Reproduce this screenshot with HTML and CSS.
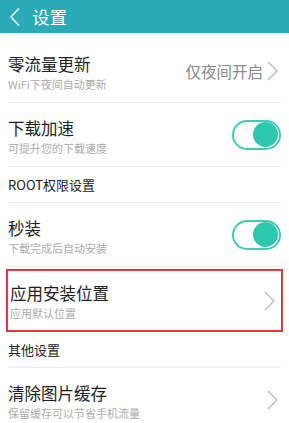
FILE: index.html
```html
<!DOCTYPE html>
<html lang="zh-CN">
<head>
    <meta charset="UTF-8">
    <meta name="viewport" content="width=device-width, initial-scale=1.0">
    <title>设置</title>
    <link rel="stylesheet" href="styles.css">
</head>
<body>
    <div class="top-bar">
        <svg class="back" width="12" height="20" viewBox="0 0 12 20">
            <polyline points="10,1.5 2,10 10,18.5" fill="none" stroke="#ffffff" stroke-width="1.5"/>
        </svg>
        <span class="top-title">设置</span>
    </div>

    <div class="list">
        <div class="item">
            <div class="texts">
                <div class="title">零流量更新</div>
                <div class="sub">WiFi下夜间自动更新</div>
            </div>
            <span class="value">仅夜间开启</span>
            <svg class="arrow" width="11" height="20" viewBox="0 0 11 20">
                <polyline points="1,1 10,10 1,19" fill="none" stroke="#b8b8b8" stroke-width="1.3"/>
            </svg>
        </div>
        <div class="item">
            <div class="texts">
                <div class="title">下载加速</div>
                <div class="sub">可提升您的下载速度</div>
            </div>
            <div class="switch on"><span class="knob"></span></div>
        </div>
        <div class="group">ROOT权限设置</div>
        <div class="item">
            <div class="texts">
                <div class="title">秒装</div>
                <div class="sub">下载完成后自动安装</div>
            </div>
            <div class="switch on"><span class="knob"></span></div>
        </div>
        <div class="item marked">
            <div class="texts">
                <div class="title">应用安装位置</div>
                <div class="sub">应用默认位置</div>
            </div>
            <svg class="arrow" width="11" height="20" viewBox="0 0 11 20">
                <polyline points="1,1 10,10 1,19" fill="none" stroke="#b8b8b8" stroke-width="1.3"/>
            </svg>
        </div>
        <div class="group">其他设置</div>
        <div class="item">
            <div class="texts">
                <div class="title">清除图片缓存</div>
                <div class="sub">保留缓存可以节省手机流量</div>
            </div>
            <svg class="arrow" width="11" height="20" viewBox="0 0 11 20">
                <polyline points="1,1 10,10 1,19" fill="none" stroke="#b8b8b8" stroke-width="1.3"/>
            </svg>
        </div>
    </div>
</body>
</html>
```

FILE: styles.css
```css
body {
    margin: 0;
    background-color: #ffffff;
    font-family: "Noto Sans CJK SC", "Noto Sans", sans-serif;
    overflow: hidden;
}
.top-bar {
    display: flex;
    align-items: center;
    height: 33px;
    padding-left: 9px;
    background-color: #29aab6;
    box-shadow: 0 1px 4px rgba(0,0,0,0.12);
}
.back {
    margin-right: 11px;
}
.top-title {
    color: #ffffff;
    font-size: 17.5px;
    line-height: 1;
}
.list {
    padding-top: 6px;
}
.item {
    display: flex;
    align-items: center;
    height: 64px;
    margin: 0 8px;
    border-bottom: 1px solid #eeeeee;
    box-sizing: border-box;
}
.texts {
    flex: 1;
    align-self: flex-start;
    padding-top: 13px;
}
.title {
    font-size: 16.5px;
    line-height: 24px;
    color: #1e1e1e;
}
.sub {
    font-size: 11px;
    line-height: 16px;
    color: #ababab;
}
.value {
    font-size: 15.5px;
    color: #8a8a8a;
    margin-right: 4px;
}
.arrow {
    margin-right: 3px;
}
.group {
    height: 36px;
    margin: 0 8px;
    display: flex;
    align-items: center;
    font-size: 13px;
    color: #222222;
    border-bottom: 1px solid #eeeeee;
    box-sizing: border-box;
}
.marked {
    margin: 2px 6px 0 6px;
    padding: 0 6px 0 2px;
    height: 63px;
    border: 2px solid #e3363d;
}
.marked .texts {
    padding-top: 10px;
}
.marked .arrow {
    margin-right: 0;
}
.switch {
    width: 49px;
    height: 30px;
    border: 2px solid #3fcbb5;
    border-radius: 16px;
    box-sizing: border-box;
    display: flex;
    align-items: center;
    justify-content: flex-end;
    padding-right: 1px;
}
.knob {
    width: 25px;
    height: 25px;
    border-radius: 50%;
    background-color: #2dc7ae;
}
```
